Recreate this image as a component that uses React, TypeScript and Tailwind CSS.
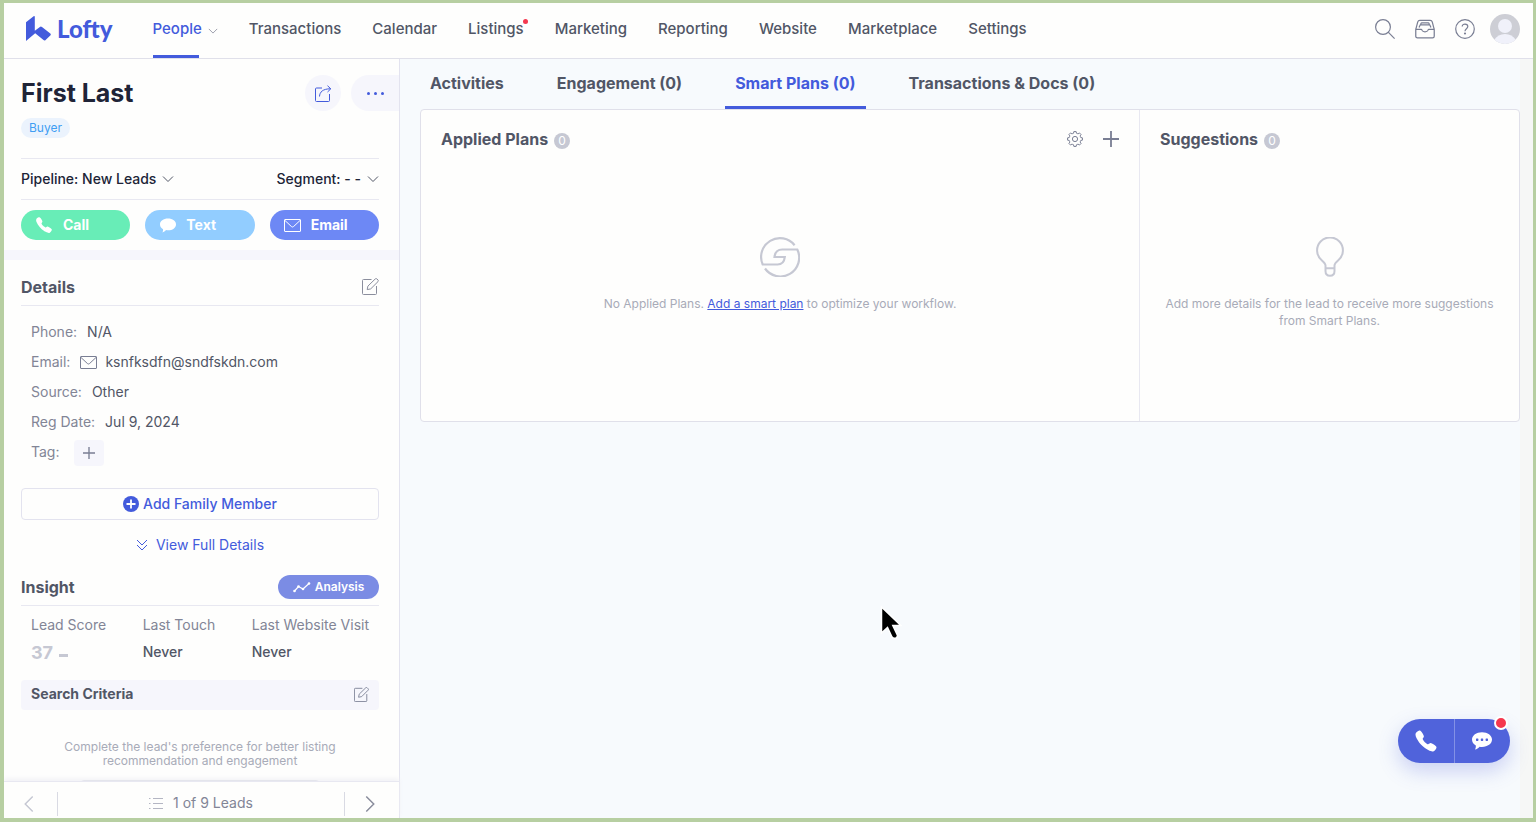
import type { ReactNode } from 'react';
import { IoCall } from 'react-icons/io5';

const navItems = ['Transactions', 'Calendar', 'Listings', 'Marketing', 'Reporting', 'Website', 'Marketplace', 'Settings'];
const tabs = ['Activities', 'Engagement (0)', 'Smart Plans (0)', 'Transactions & Docs (0)'];

type IconProps = { className?: string };

function Chevron({ className = '' }: IconProps) {
  return (
    <svg viewBox="0 0 12 8" className={className} fill="none" stroke="currentColor" aria-hidden="true">
      <path d="M1 1.5 6 6.5 11 1.5" />
    </svg>
  );
}

function LogoMark() {
  return (
    <svg viewBox="0 0 25 25" className="h-[25px] w-[25px]" fill="currentColor" aria-hidden="true">
      <path d="M0 6.200 7.600.3Q8.800-.4 8.800 1V14.800L13.900 10.900Q15 10.200 16 11L24.300 17.600Q25.300 18.500 24.300 19.400L19.600 24Q18.600 25 17.500 24.100L9.200 17.300 0 25Z" />
    </svg>
  );
}

function Mail({ className = '' }: IconProps) {
  return (
    <svg viewBox="0 0 17 13" className={className} fill="none" stroke="currentColor" strokeLinejoin="round" aria-hidden="true">
      <rect x=".5" y=".5" width="16" height="12" rx=".5" />
      <path d="m1 1.500 6.400 6q1.100 1 2.200 0l6.400-6" />
    </svg>
  );
}

function Edit({ className = '' }: IconProps) {
  return (
    <svg viewBox="0 0 17 17" className={className} fill="none" stroke="currentColor" strokeLinejoin="round" aria-hidden="true">
      <path d="M9.500 1.500H1.500q-1 0-1 1v13q0 1 1 1h12q1 0 1-1V8" />
      <path d="m5.200 11.600.7-3.500L13.300.9q.8-.7 1.600 0l1.100 1.100q.8.800 0 1.600L8.700 10.900Z" />
    </svg>
  );
}

function Plus({ className = '' }: IconProps) {
  return (
    <svg viewBox="0 0 16 16" className={className} fill="none" stroke="currentColor" strokeWidth="1.800" aria-hidden="true">
      <path d="M8 0v16M0 8h16" />
    </svg>
  );
}

function Gear() {
  const teeth = Array.from({ length: 8 }, (_, i) => {
    const at = (r: number, deg: number) => {
      const a = ((i * 45 + deg) * Math.PI) / 180;
      return `${(8 + r * Math.sin(a)).toFixed(2)} ${(8 - r * Math.cos(a)).toFixed(2)}`;
    };
    return `${i ? 'L' : 'M'}${at(7.500, -9)}L${at(7.500, 9)}Q${at(5.300, 13)} ${at(5.900, 22.500)}Q${at(5.300, 32)} ${at(7.500, 36)}`;
  }).join('');
  return (
    <svg viewBox="0 0 16 16" className="size-4" fill="none" stroke="currentColor" strokeLinejoin="round" aria-hidden="true">
      <path d={teeth + 'Z'} />
      <circle cx="8" cy="8" r="2.600" />
    </svg>
  );
}

function Bubble({ className = '', dots = false }: IconProps & { dots?: boolean }) {
  return (
    <svg viewBox="0 0 20 18" className={className} fill="currentColor" aria-hidden="true">
      <path d="M10 .3c5.700 0 10 3.100 10 7.300s-4.300 7.300-10 7.300c-.9 0-1.600 0-2.400-.2-1.200 1.500-2.800 2.400-4.600 2.900.7-1.200 1-2.500.8-4C1.400 12.200 0 10.100 0 7.600 0 3.400 4.300.3 10 .3Z" />
      {dots && (
        <g className="fill-[#5063db]">
          <rect x="4" y="6.500" width="2.400" height="2.400" rx=".6" />
          <rect x="8.800" y="6.500" width="2.400" height="2.400" rx=".6" />
          <rect x="13.600" y="6.500" width="2.400" height="2.400" rx=".6" />
        </g>
      )}
    </svg>
  );
}

function Header() {
  return (
    <header className="flex h-14 shrink-0 items-stretch border-b border-[#e0e0ea] bg-[#fefefd] pr-[13px] pl-[22px]">
      <a href="#home" className="mr-10 flex items-center gap-1.5 pb-1 text-[#435bdc]" aria-label="Lofty">
        <LogoMark />
        <span className="font-['Lato'] text-2xl leading-7 font-black">Lofty</span>
      </a>
      <nav className="flex flex-1 items-stretch gap-[31px] text-[15px] font-medium text-[#515666]">
        <a href="#people" className="relative flex items-center gap-1.5 pb-0.5 text-[#435bdc]">
          People
          <Chevron className="mt-0.5 h-2 w-2.5 text-[#8b8e9d]" />
          <span className="absolute bottom-0 left-0 h-[3px] w-[46px] bg-[#435bdc]" />
        </a>
        {navItems.map((item) => (
          <a key={item} href={`#${item.toLowerCase()}`} className="relative flex items-center pb-0.5">
            {item}
            {item === 'Listings' && <span className="absolute top-4 -right-1 size-[5px] rounded-full bg-[#f5384f]" />}
          </a>
        ))}
      </nav>
      <div className="flex items-center gap-5 pb-1 text-[#797e93]">
        <button type="button" aria-label="Search">
          <svg viewBox="0 0 20 20" className="size-5" fill="none" stroke="currentColor" strokeWidth="1.200">
            <circle cx="8" cy="8" r="7.400" />
            <path d="m13.200 13.200 6.400 6.400" />
          </svg>
        </button>
        <button type="button" aria-label="Inbox">
          <svg viewBox="0 0 21 20" className="size-5" fill="none" stroke="currentColor" strokeWidth="1.300" strokeLinejoin="round">
            <path d="M.8 10.500h5.600q.7 0 .9.700.7 1.800 3.200 1.800t3.200-1.800q.2-.7.9-.7h5.600v7q0 1.800-1.800 1.800H2.600Q.8 19.300.8 17.500Z" />
            <path d="m.9 10.200 2-7.700Q3.400.9 5 .9h11q1.600 0 2.100 1.600l2 7.700M4.300 8.500l.8-2.200q.2-.6.8-.6h9.200q.6 0 .8.600l.8 2.200M5.900 5.700l.4-1.600q.2-.6.8-.6h6.800q.6 0 .8.600l.4 1.600" />
          </svg>
        </button>
        <button type="button" aria-label="Help">
          <svg viewBox="0 0 20 20" className="size-5" fill="none" stroke="currentColor" strokeWidth="1.200">
            <circle cx="10" cy="10" r="9.300" />
            <path d="M7.200 7.600c0-3.500 5.600-3.300 5.600-.1 0 2.200-2.800 2.200-2.800 4.700" />
            <circle cx="10" cy="14.500" r=".5" fill="currentColor" />
          </svg>
        </button>
        <button type="button" aria-label="Account" className="-ml-[5px]">
          <svg viewBox="0 0 30 30" className="size-[30px] overflow-hidden rounded-full">
            <rect width="30" height="30" fill="#cdced5" />
            <circle cx="15" cy="12" r="7" fill="#f0f1fa" />
            <path d="M4 26q4-6 11-6t11 6v4H4Z" fill="#f0f1fa" />
          </svg>
        </button>
      </div>
    </header>
  );
}

function Row({ label, children }: { label: string; children: ReactNode }) {
  return (
    <div className="flex h-[30px] items-center gap-2.5">
      <dt className="text-[#828596]">{label}:</dt>
      <dd className="flex items-center gap-2 text-[#515666]">{children}</dd>
    </div>
  );
}

function Sidebar() {
  return (
    <aside className="flex w-[396px] shrink-0 flex-col border-r border-[#e3e3ef] bg-[#fefefd]">
      <div className="min-h-0 flex-1 overflow-hidden text-sm">
        <section className="border-b-10 border-[#f6f6fc] pb-2.5 pl-[17px]">
          <div className="flex items-center pt-4">
            <h1 className="flex-1 text-[25px] leading-9 font-bold text-[#202437]">First Last</h1>
            <button type="button" aria-label="Share" className="mr-2.5 flex size-9 items-center justify-center rounded-full bg-[#f6f6fc] text-[#435bdc]">
              <svg viewBox="0 0 17 17" className="size-[17px]" fill="none" stroke="currentColor">
                <path d="M7 3H1.500q-1 0-1 1v11.500q0 1 1 1h12q1 0 1-1V9M4.500 11.500c.2-4.500 3.300-7.700 11-7.700M12.500.7l3.300 3.100-3.300 3.200" />
              </svg>
            </button>
            <button type="button" aria-label="More" className="flex h-9 w-12 items-center justify-center gap-1 rounded-l-full bg-[#f6f6fc]">
              <span className="size-[3px] rounded-full bg-[#435bdc]" />
              <span className="size-[3px] rounded-full bg-[#435bdc]" />
              <span className="size-[3px] rounded-full bg-[#435bdc]" />
            </button>
          </div>
          <span className="mt-[7px] mb-5 block h-5 w-[49px] rounded-full bg-[#ebf3fd] text-center text-xs leading-5 text-[#3f9ef3]">Buyer</span>
          <div className="mr-5 flex h-[42px] items-center justify-between border-y border-[#e8e8f1] font-medium text-[#202437]">
            <button type="button" className="flex items-center gap-1.5">
              Pipeline: New Leads <Chevron className="h-2 w-3 text-[#515666]" />
            </button>
            <button type="button" className="flex items-center gap-1.5">
              Segment: - - <Chevron className="h-2 w-3 text-[#515666]" />
            </button>
          </div>
          <div className="mt-2.5 mr-5 grid grid-cols-3 gap-[15px] font-bold text-white">
            <button type="button" className="flex h-[30px] items-center gap-2.5 rounded-full bg-[#68edb7] pl-3.5">
              <IoCall className="size-[18px]" /> Call
            </button>
            <button type="button" className="flex h-[30px] items-center gap-2.5 rounded-full bg-[#92cdff] pl-[15px]">
              <Bubble className="h-[15px] w-4" /> Text
            </button>
            <button type="button" className="flex h-[30px] items-center gap-2.5 rounded-full bg-[#6d88f5] pl-3.5">
              <Mail className="h-[13px] w-[17px]" /> Email
            </button>
          </div>
        </section>

        <section className="mr-5 ml-[17px]">
          <div className="flex h-[46px] items-center justify-between border-b border-[#e8e8f1] pt-2">
            <h2 className="text-base font-bold text-[#515666]">Details</h2>
            <button type="button" aria-label="Edit details" className="text-[#8b8e9d]"><Edit className="size-[17px]" /></button>
          </div>
          <dl className="mt-[11px] ml-2.5">
            <Row label="Phone">N/A</Row>
            <Row label="Email"><Mail className="h-[13px] w-[17px] text-[#797e93]" />ksnfksdfn@sndfskdn.com</Row>
            <Row label="Source">Other</Row>
            <Row label="Reg Date">Jul 9, 2024</Row>
            <Row label="Tag">
              <button type="button" aria-label="Add tag" className="mt-0.5 ml-1 flex h-[26px] w-[30px] items-center justify-center rounded bg-[#f6f6fc] text-[#797e93]"><Plus className="size-3" /></button>
            </Row>
          </dl>
          <button type="button" className="mt-[21px] flex h-8 w-full items-center justify-center gap-1 rounded border border-[#e3e3ef] font-medium text-[#435bdc]">
            <svg viewBox="0 0 16 16" className="size-4" aria-hidden="true">
              <circle cx="8" cy="8" r="8" fill="currentColor" />
              <path d="M8 3.500v9M3.500 8h9" stroke="white" strokeWidth="1.800" />
            </svg>
            Add Family Member
          </button>
          <button type="button" className="mt-[15px] flex w-full items-center justify-center gap-2 text-[#435bdc]">
            <svg viewBox="0 0 12 12" className="size-3" fill="none" stroke="currentColor" aria-hidden="true">
              <path d="m1 1 5 5 5-5M1 6l5 5 5-5" />
            </svg>
            View Full Details
          </button>
          <div className="mt-[18px] flex h-[33px] items-center justify-between border-b border-[#e8e8f1] pb-[5px]">
            <h2 className="text-base font-bold text-[#515666]">Insight</h2>
            <button type="button" className="flex h-6 w-[101px] items-center justify-center gap-1 rounded-full bg-[#7b8ce4] text-xs font-semibold text-white">
              <svg viewBox="0 0 18 12" className="h-3 w-[18px]" fill="none" stroke="currentColor" strokeWidth="1.200" aria-hidden="true">
                <path d="m1.500 10 4-4.500L10 8l6-5.500" />
                <g fill="currentColor" stroke="none"><circle cx="1.500" cy="10" r="1.300" /><circle cx="5.500" cy="5.500" r="1.300" /><circle cx="10" cy="8" r="1.300" /><circle cx="16" cy="2.500" r="1.300" /></g>
              </svg>
              Analysis
            </button>
          </div>
          <dl className="mx-2.5 mt-[9px] flex justify-between text-[#828596]">
            <div>
              <dt>Lead Score</dt>
              <dd className="mt-1.5 flex items-center gap-1.5 text-lg leading-6 font-bold text-[#c6c8d3]">37 <span className="mt-1 h-[3px] w-[9px] bg-current" /></dd>
            </div>
            <div>
              <dt>Last Touch</dt>
              <dd className="mt-[7px] font-medium text-[#515666]">Never</dd>
            </div>
            <div>
              <dt>Last Website Visit</dt>
              <dd className="mt-[7px] font-medium text-[#515666]">Never</dd>
            </div>
          </dl>
          <div className="mt-[15px] flex h-[30px] items-center justify-between rounded bg-[#f6f6fc] px-2.5 pb-0.5">
            <h3 className="font-bold text-[#515666]">Search Criteria</h3>
            <button type="button" aria-label="Edit search criteria" className="text-[#797e93]"><Edit className="size-[15px]" /></button>
          </div>
          <p className="mx-auto mt-[30px] max-w-[290px] text-center text-xs leading-[14px] text-[#a8abb8]">
            Complete the lead's preference for better listing recommendation and engagement
          </p>
          <div className="mx-auto mt-3 h-8 w-[240px] rounded border border-[#c6c8d3]" />
        </section>
      </div>
      <footer className="relative flex h-[37px] shrink-0 items-end border-t border-[#e8e8f1] text-sm text-[#828596] shadow-[0_-2px_5px_#f0f0f5]">
        <button type="button" aria-label="Previous lead" className="flex h-full w-[54px] items-center justify-between pt-2 pl-4 text-[#c6c8d3]">
          <Chevron className="h-3 w-[18px] rotate-90" />
          <span className="h-6 w-px bg-[#d9dae3]" />
        </button>
        <button type="button" className="flex h-[30px] flex-1 items-center justify-center gap-2.5">
          <svg viewBox="0 0 14 11" className="h-[11px] w-3.5" fill="none" stroke="#b4b6c3" aria-hidden="true">
            <path d="M0 .5h1.500M4 .5h10M0 5.500h1.500M4 5.500h10M0 10.500h1.500M4 10.500h10" />
          </svg>
          1 of 9 Leads
        </button>
        <button type="button" aria-label="Next lead" className="flex h-full w-[55px] items-center justify-between pt-2 pr-5 text-[#8b8e9d]">
          <span className="h-6 w-px bg-[#d9dae3]" />
          <Chevron className="h-3 w-[18px] -rotate-90" />
        </button>
      </footer>
    </aside>
  );
}

function PanelTitle({ children }: { children: ReactNode }) {
  return (
    <h2 className="flex items-center gap-1.5 text-base font-bold text-[#515666]">
      {children}
      <span className="mt-1 size-4 rounded-full bg-[#c6c8d3] text-center text-xs leading-4 font-normal text-white">0</span>
    </h2>
  );
}

function Main() {
  return (
    <main className="min-w-0 flex-1 bg-[#f7fafd] pl-5">
      <div role="tablist" className="flex h-[50px] gap-[33px] text-base font-bold text-[#515666]">
        {tabs.map((tab, i) => (
          <button
            key={tab}
            type="button"
            role="tab"
            aria-selected={i === 2}
            className={i === 2 ? 'border-b-3 border-[#435bdc] px-2.5 pt-px text-[#435bdc]' : 'border-b-3 border-transparent px-2.5 pt-px'}
          >
            {tab}
          </button>
        ))}
      </div>
      <div className="grid grid-cols-[minmax(0,1fr)_379px] rounded border border-[#e0e0ea] bg-[#fefefd] text-xs text-[#a8abb8]">
        <section className="h-[311px] border-r border-[#e8e8f1] px-5 pt-[17px]">
          <div className="flex items-center justify-between">
            <PanelTitle>Applied Plans</PanelTitle>
            <div className="flex items-center gap-5 text-[#797e93]">
              <button type="button" aria-label="Plan settings"><Gear /></button>
              <button type="button" aria-label="Add plan"><Plus className="size-4" /></button>
            </div>
          </div>
          <svg viewBox="0 0 40 40" className="mx-auto mt-[86px] size-10" fill="none" stroke="#c6c8d3" strokeWidth="2.200" aria-hidden="true">
            <path d="M34.600 8.200A18.800 18.800 0 0 0 2.700 27.500H17.500q6.500 0 7.300-7.500H14.500q.8-7.500 7.800-7.500H37.300A18.800 18.800 0 0 1 5 31.500" />
          </svg>
          <p className="mt-[18px] text-center leading-[17px]">
            No Applied Plans. <a href="#add-plan" className="text-[#435bdc] underline">Add a smart plan</a> to optimize your workflow.
          </p>
        </section>
        <section className="px-5 pt-[17px]">
          <PanelTitle>Suggestions</PanelTitle>
          <svg viewBox="0 0 40 40" className="mx-auto mt-[86px] size-10" fill="none" stroke="#c6c8d3" strokeWidth="2" aria-hidden="true">
            <path d="M15.500 31v-2.500c0-2-1.600-3.400-3.800-5.300A12.900 12.900 0 1 1 28.300 23.200c-2.200 1.900-3.800 3.300-3.800 5.300V34q0 4.800-4.500 4.800T15.500 34ZM15.500 31.200h9" />
          </svg>
          <p className="mt-[18px] text-center leading-[17px]">Add more details for the lead to receive more suggestions from Smart Plans.</p>
        </section>
      </div>
    </main>
  );
}

export default function App() {
  return (
    <div className="relative flex h-screen flex-col overflow-hidden border-4 border-t-3 border-r-3 border-[#b7cfa2] bg-[#fefefd] font-['Inter',sans-serif]">
      <Header />
      <div className="flex min-h-0 flex-1">
        <Sidebar />
        <Main />
        <div className="w-[13px] shrink-0 bg-[#f6f7f6]" />
      </div>

      <div className="absolute right-[23px] bottom-[55px] flex h-11 w-28 rounded-full bg-[#5063db] text-white shadow-[0_8px_20px_#5063db45]">
        <button type="button" aria-label="Call lead" className="flex flex-1 items-center justify-center border-r border-[#8391e6]"><IoCall className="size-6" /></button>
        <button type="button" aria-label="Message lead" className="flex flex-1 items-center justify-center"><Bubble dots className="h-[18px] w-5" /></button>
        <span className="absolute -top-[3px] right-0.5 size-3.5 rounded-full border-2 border-white bg-[#f5384f]" />
      </div>

      <svg viewBox="0 0 24 36" className="absolute top-[601px] left-[874px] h-9 w-6" aria-hidden="true">
        <path d="M3.500 3v26l6-5.500 4.500 9.500q1.500 2 4 1 2-1.300 1.300-3l-4.500-9.500h8Z" fill="black" stroke="white" strokeWidth="1.500" />
      </svg>
    </div>
  );
}
